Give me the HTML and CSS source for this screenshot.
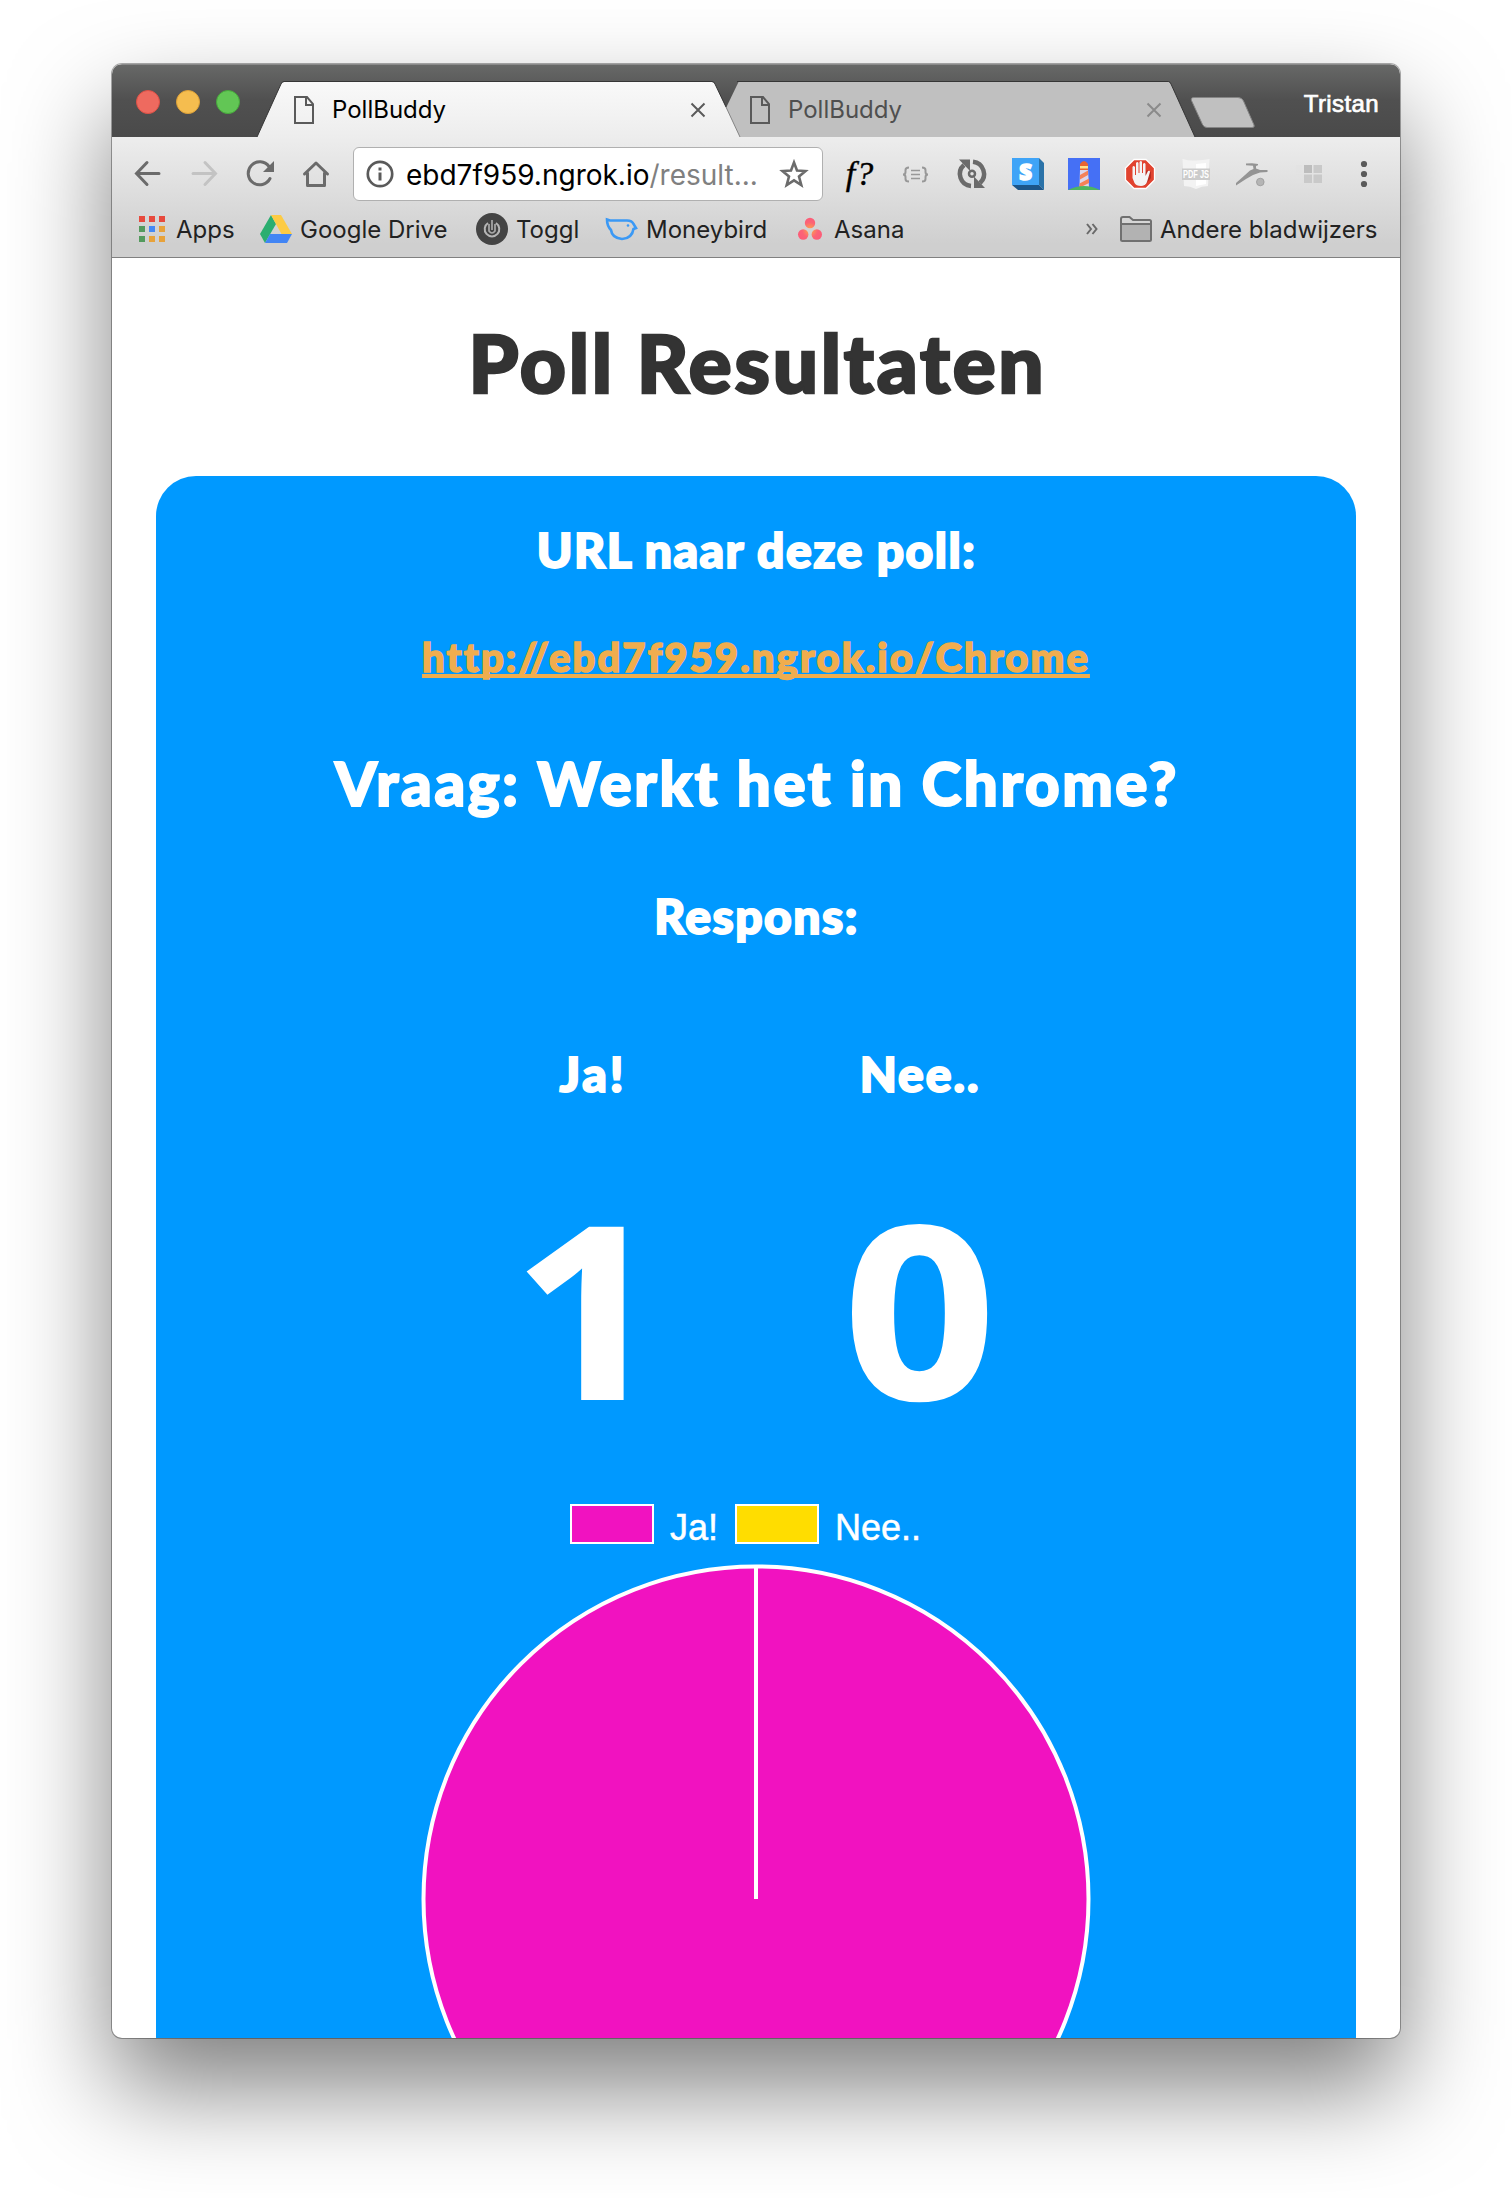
FILE: index.html
```html
<!DOCTYPE html>
<html lang="nl">
<head>
<meta charset="utf-8">
<title>PollBuddy</title>
<link rel="stylesheet" href="styles.css">
</head>
<body>
<main class="window">
  <header class="chrome">
    <div class="tabstrip">
      <svg class="tab-shapes" width="1288" height="73" viewBox="112 64 1288 73">
        <defs>
          <linearGradient id="tabfill" x1="0" y1="0" x2="0" y2="1"><stop offset="0" stop-color="#f9f9f9"/><stop offset="1" stop-color="#ededed"/></linearGradient>
        </defs>
        <path d="M712 137L738.500 82H1168.500Q1170 82 1171 84L1195 137Z" fill="#c0c0c0"/>
        <path d="M737 81.500H1168.500Q1170 81.500 1171 84L1195 137" fill="none" stroke="#363636" stroke-width="1"/>
        <path d="M257 137L281 84Q282 82 284 82H712Q714 82 715 84L740 137Z" fill="url(#tabfill)"/>
        <path d="M257 137L281 84Q282 81.500 284 81.500H712Q714 81.500 715 84L726 107" fill="none" stroke="#363636"/>
        <path d="M726 107L740 137" stroke="#858585" fill="none"/>
        <path d="M1194 97.500H1238Q1242 97.500 1243.500 101L1254 125Q1255 127.500 1252 127.500H1207Q1204 127.500 1202.500 124.500L1191.500 100.500Q1190.500 97.500 1194 97.500Z" fill="#c0c0c0" stroke="#858585"/>
      </svg>
      <div class="lights"><i class="red"></i><i class="yellow"></i><i class="green"></i></div>
      <div class="tab">
        <svg width="20" height="28" viewBox="0 0 20 28"><path d="M1 1H13L19 8V27H1ZM12 1V9H19" fill="none" stroke="#5a5a5a" stroke-width="2"/></svg>
        <span class="tab-title">PollBuddy</span>
        <svg width="16" height="16" viewBox="0 0 16 16"><path d="M1.500 1.500L14.500 14.500M14.500 1.500L1.500 14.500" stroke="#5a5a5a" stroke-width="2"/></svg>
      </div>
      <div class="tab inactive">
        <svg width="20" height="28" viewBox="0 0 20 28"><path d="M1 1H13L19 8V27H1ZM12 1V9H19" fill="none" stroke="#5a5a5a" stroke-width="2"/></svg>
        <span class="tab-title">PollBuddy</span>
        <svg width="16" height="16" viewBox="0 0 16 16"><path d="M1.500 1.500L14.500 14.500M14.500 1.500L1.500 14.500" stroke="#8a8a8a" stroke-width="2"/></svg>
      </div>
      <span class="profile">Tristan</span>
    </div>

    <div class="toolbar">
      <div class="icons">
        <svg width="32" height="32" viewBox="132 158 32 32"><path d="M159 173.500H136.500M147 162.500L136.500 173.500L147 184.500" fill="none" stroke="#6b6b6b" stroke-width="3" stroke-linecap="round"/></svg>
        <svg width="32" height="32" viewBox="188 158 32 32"><path d="M193 173.500H215.500M205 162.500L215.500 173.500L205 184.500" fill="none" stroke="#c3c3c3" stroke-width="3" stroke-linecap="round"/></svg>
        <svg width="32" height="32" viewBox="244 158 32 32"><path d="M269 166.500A11.500 11.500 0 1 0 270 178.500" fill="none" stroke="#6b6b6b" stroke-width="3" stroke-linecap="round"/><path d="M274 161V172H263Z" fill="#6b6b6b"/></svg>
        <svg width="32" height="32" viewBox="300 158 32 32"><path d="M304.500 174L316 163L327.500 174M307.500 173V185.500H324.500V173" fill="none" stroke="#6b6b6b" stroke-width="3" stroke-linejoin="round" stroke-linecap="round"/></svg>
      </div>
      <div class="omnibox">
        <svg width="28" height="28" viewBox="0 0 28 28"><circle cx="14" cy="14" r="12.200" fill="none" stroke="#5a5a5a" stroke-width="2.700"/><path d="M12.500 7.500h3v3h-3zM12.500 12.500h3v8h-3z" fill="#5a5a5a"/></svg>
        <span class="url"><span class="host">ebd7f959.ngrok.io</span><span class="path">/result...</span></span>
        <svg width="30" height="30" viewBox="0 0 30 30"><path d="M15 3.500L18 11.500L26.500 12L20 17.500L22.300 26L15 21.300L7.700 26L10 17.500L3.500 12L12 11.500Z" fill="none" stroke="#6b6b6b" stroke-width="2.600"/></svg>
      </div>
      <div class="icons">
        <span class="fq">f?</span>
        <svg width="32" height="32" viewBox="900 158 32 32"><path d="M909 167.500Q905.500 167.500 905.500 170V172Q905.500 174.500 903 174.500Q905.500 174.500 905.500 177V179Q905.500 181.500 909 181.500M922 167.500Q925.500 167.500 925.500 170V172Q925.500 174.500 928 174.500Q925.500 174.500 925.500 177V179Q925.500 181.500 922 181.500" fill="none" stroke="#989898" stroke-width="2"/><path d="M911 170.500H920M911 174.500H920M911 178.500H920" stroke="#989898" stroke-width="1.500"/></svg>
        <svg width="32" height="32" viewBox="956 158 32 32"><path d="M964 165A12 12 0 0 0 971 186M973 161.700A12.300 12.300 0 0 1 980 183" fill="none" stroke="#6b6b6b" stroke-width="4.500"/><path d="M959 159.500H970V171ZM974 176.500V188H985Z" fill="#6b6b6b"/><circle cx="972" cy="173.800" r="3" fill="none" stroke="#6b6b6b" stroke-width="2.500"/></svg>
        <svg width="32" height="32" viewBox="0 0 32 32"><path d="M27 0L32 5V32L27 27Z" fill="#2a72a8"/><path d="M0 27H27L32 32H6Z" fill="#1c568a"/><path d="M0 0H27V27H0Z" fill="#3fa4f7"/><text x="13.500" y="21.500" text-anchor="middle" font-family="Open Sans, sans-serif" font-weight="800" font-size="22" stroke="#fff" stroke-width="1.600" fill="#fff">S</text></svg>
        <svg width="32" height="32" viewBox="0 0 32 32"><path d="M0 0H32V32H0Z" fill="#4570f5"/><path d="M12 11H20L21 29H11.500Z" fill="#dcd7ea"/><path d="M12 17L20 12.500V17L12 21.500ZM11.500 25.500L21 20.500V25L13 29H11.500Z" fill="#f48258"/><path d="M12 7H20V12H12Z" fill="#ffe28a"/><path d="M12 8V6Q16 0 20 6V8ZM12 10.500H20V12H12Z" fill="#e96532"/><path d="M0 32Q8 28 16 28T32 32Z" fill="#4db560"/></svg>
        <svg width="32" height="32" viewBox="0 0 32 32"><path d="M10 1.500H22L30.500 10V22L22 30.500H10L1.500 22V10Z" fill="#e1432f" stroke="#fff" stroke-width="1.300"/><path d="M23 12L27 14V20L20 28L13 27Z" fill="#b72c20"/><path d="M8.500 9Q9.500 7 11 9V17H12V5Q13.500 3 14.500 5V15H15.500V4Q17 2 18 4V15H19V6Q20.500 4 21.500 6V18L24 13Q26 12 26 14L23 24Q21.500 28 17 28Q12 28 10.500 25L8.500 20Z" fill="#f4f4f4"/></svg>
        <svg width="32" height="32" viewBox="0 0 32 32"><path d="M2.500 1Q9 3 16 2.500T29.500 1L28 28Q22 28 16 31Q10 28 4 28Z" fill="#f3f3f3"/><path d="M16 6L26 5V26L16 28Z" fill="#fff"/><path d="M2 10.500H30V22H2Z" fill="#cbcbcb"/><text x="16" y="20.300" text-anchor="middle" textLength="26" lengthAdjust="spacingAndGlyphs" font-family="Liberation Sans, sans-serif" font-weight="700" font-size="11" fill="#fff">PDF JS</text></svg>
        <svg width="32" height="32" viewBox="0 0 32 32"><path d="M0 27.500V25L9 17L14 12.500L17.500 11L17 7.800L10 7.200V5.500L16 5.200L22 6V7.300L20 8V10.500L24 12L31.500 12V14L24 14.500L17 17L10 21Z" fill="#949494"/><circle cx="24.300" cy="24" r="3.800" fill="#b5b5b5" stroke="#999" stroke-width=".8"/></svg>
        <svg width="32" height="32" viewBox="0 0 32 32"><path d="M12 7H20V15H12Z" fill="#bdbdbd"/><path d="M21.500 7H30V15H21.500ZM12 16.500H20V25H12ZM21.500 16.500H30V25H21.500Z" fill="#c9c9c9"/><path d="M4 7H10V15H4ZM4 16.500H10V25H4Z" fill="#e1e1e1" opacity=".5"/></svg>
        <svg width="32" height="32" viewBox="0 0 32 32"><g fill="#5a5a5a"><circle cx="16" cy="6" r="3.100"/><circle cx="16" cy="16" r="3.100"/><circle cx="16" cy="26" r="3.100"/></g></svg>
      </div>
    </div>

    <nav class="bookmarks">
      <div class="bm bm-apps"><svg width="26" height="26" viewBox="0 0 26 26"><path d="M0 0h6v6H0zM10 0h6v6h-6zM20 0h6v6h-6z" fill="#e74a3d"/><path d="M0 10h6v6H0zM0 20h6v6H0z" fill="#539a5d"/><path d="M10 10h6v6h-6z" fill="#4489f5"/><path d="M20 10h6v6h-6zM10 20h6v6h-6zM20 20h6v6h-6z" fill="#e8a23a"/></svg><span>Apps</span></div>
      <div class="bm bm-drive"><svg width="32" height="30" viewBox="0 0 32 30"><path d="M11 1L16 10L5 29L0 20Z" fill="#2bae70"/><path d="M11 1H21L32 20H21.500Z" fill="#fdcb44"/><path d="M10 20H32L27 29H5Z" fill="#4285f4"/></svg><span>Google Drive</span></div>
      <div class="bm bm-toggl"><svg width="32" height="32" viewBox="0 0 32 32"><circle cx="16" cy="16" r="16" fill="#444"/><path d="M12 10A7.300 7.300 0 1 0 20 10" fill="none" stroke="#b6b6b6" stroke-width="2"/><path d="M16 7V17M13 11V18Q16 22 19 18V11" fill="none" stroke="#aaa" stroke-width="1.700"/></svg><span>Toggl</span></div>
      <div class="bm bm-money"><svg width="33" height="26" viewBox="0 0 33 26"><path d="M2 3.500L5 4.500H22Q27 4.500 28.500 8L31 12L28.500 13Q27 22.500 17 23Q7 22 6 14Q2 10 2 3.500Z" fill="none" stroke="#3b99f5" stroke-width="2.600"/><circle cx="23" cy="9.500" r="1.300" fill="#3b99f5"/></svg><span>Moneybird</span></div>
      <div class="bm bm-asana"><svg width="24" height="24" viewBox="0 0 24 24"><defs><radialGradient id="as" gradientUnits="userSpaceOnUse" cx="12" cy="13" r="13"><stop offset="0" stop-color="#ffab45"/><stop offset=".6" stop-color="#fc6376"/><stop offset="1" stop-color="#fc5c78"/></radialGradient></defs><g fill="url(#as)"><circle cx="12" cy="6" r="5.200"/><circle cx="5.200" cy="17.500" r="5.200"/><circle cx="18.800" cy="17.500" r="5.200"/></g></svg><span>Asana</span></div>
      <svg class="more" width="12" height="12" viewBox="0 0 12 12"><path d="M1 1L5 6L1 11M6.500 1L10.500 6L6.500 11" fill="none" stroke="#6a6a6a" stroke-width="2"/></svg>
      <div class="bm bm-other"><svg width="32" height="26" viewBox="0 0 32 26"><path d="M1 24V3Q1 1 3 1H9.500L13 4H29.500Q31 4 31 5.500V23.500Q31 25 29.500 25H2.500Q1 25 1 23.500Z" fill="#d6d6d6" stroke="#707070" stroke-width="2"/><path d="M2 9H30V24H2Z" fill="#b2b2b2"/><path d="M1 8H31" stroke="#707070" stroke-width="2"/></svg><span>Andere bladwijzers</span></div>
    </nav>
  </header>

  <section class="page">
    <h1>Poll Resultaten</h1>
    <div class="card">
      <h3 class="label">URL naar deze poll:</h3>
      <a class="poll-link" href="#">http://ebd7f959.ngrok.io/Chrome</a>
      <h2>Vraag: Werkt het in Chrome?</h2>
      <h3 class="respons">Respons:</h3>
      <div class="results">
        <div class="answer"><h3 class="ja">Ja!</h3><div class="count one">1</div></div>
        <div class="answer"><h3 class="nee">Nee..</h3><div class="count zero">0</div></div>
      </div>
      <div class="legend">
        <i class="swatch pink"></i><span class="legend-ja">Ja!</span>
        <i class="swatch gold"></i><span>Nee..</span>
      </div>
      <svg class="pie" width="680" height="680" viewBox="-340 -340 680 680"><circle r="332.500" fill="#f112c0" stroke="#fff" stroke-width="4"/><path d="M0 0V-332" stroke="#fff" stroke-width="4"/></svg>
    </div>
  </section>
</main>
</body>
</html>
```
FILE: styles.css
```css
* { box-sizing: border-box; }
body {
  margin: 0;
  padding: 64px 112px 0;
  height: 2198px;
  overflow: hidden;
  background: #fff;
}
svg { display: block; flex: none; overflow: visible; }
.window {
  width: 1288px;
  height: 1974px;
  overflow: hidden;
  border-radius: 10px;
  background: #fff;
  box-shadow: 0 0 0 1px rgba(0, 0, 0, .32), 0 50px 100px rgba(0, 0, 0, .5);
}
.chrome {
  height: 194px;
  background: linear-gradient(#f9f9f9 18px, #ededed 73px, #cfcfcf 180px);
  border-bottom: 1px solid #808080;
  font-family: Inter, Roboto, sans-serif;
  font-size: 24px;
  color: #222;
  white-space: nowrap;
}
.tabstrip {
  position: relative;
  height: 73px;
  display: flex;
  background: linear-gradient(#676867, #505050 35px, #4a4a4a);
  border-top: 1px solid #8a8a8a;
}
.tab-shapes { position: absolute; left: 0; top: -1px; }
.lights { display: flex; gap: 16px; padding: 25px 0 0 24px; width: 182px; }
.lights i { width: 24px; height: 24px; border-radius: 50%; border: 1px solid; }
.lights .red { background: #ee6a5f; border-color: #dd5045; }
.lights .yellow { background: #f5bd4f; border-color: #dda037; }
.lights .green { background: #62c655; border-color: #46a93b; }
.tab {
  position: relative;
  display: flex;
  align-items: center;
  width: 412px;
  height: 40px;
  margin-top: 25px;
  color: #000;
}
.tab.inactive { margin-left: 44px; color: #4f4f4f; }
.tab-title { flex: 1; margin-left: 18px; line-height: 32px; }
.profile {
  position: relative;
  margin: 24px 21px 0 auto;
  font: 24px/30px "Liberation Sans", sans-serif;
  letter-spacing: .4px;
  color: #fff;
  -webkit-text-stroke: .7px #fff;
}
.toolbar { display: flex; align-items: center; height: 74px; padding: 0 20px; gap: 21px; }
.icons { display: flex; gap: 24px; align-items: center; }
.omnibox {
  width: 470px;
  height: 54px;
  padding: 0 13px 0 12px;
  display: flex;
  align-items: center;
  border: 1px solid #b0b0b0;
  border-radius: 6px;
  background: #fff;
  font-size: 28px;
}
.url { flex: 1; margin-left: 12px; padding-top: 2px; line-height: 36px; }
.host { color: #000; }
.path { color: #808080; }
.fq {
  width: 32px;
  font: italic 34px/32px "Liberation Serif", serif;
  letter-spacing: 1px;
  color: #000;
  -webkit-text-stroke: .4px #000;
  display: flex;
  justify-content: center;
}
.bookmarks { display: flex; align-items: center; height: 36px; padding-left: 27px; }
.bm { display: flex; align-items: center; height: 36px; }
.bm span { padding-top: 1px; line-height: 35px; }
.bm-apps { width: 121px; gap: 11px; }
.bm-drive { width: 216px; gap: 8px; }
.bm-toggl { width: 129px; gap: 8px; }
.bm-money { width: 193px; gap: 8px; }
.bm-asana { width: 288px; gap: 12px; }
.more { margin-right: 22px; }
.bm-other { gap: 8px; }

.page {
  padding: 56px 44px 0;
  font-family: Lato, sans-serif;
  font-weight: 900;
  text-align: center;
  white-space: nowrap;
}
h1, h2, h3 { margin: 0; font-weight: 900; }
h1 {
  font-size: 80px;
  line-height: 96px;
  color: #333;
  letter-spacing: 2.8px;
  text-indent: 3px;
  -webkit-text-stroke: 2.5px #333;
}
.card {
  height: 1600px;
  margin-top: 66px;
  padding-top: 45px;
  border-radius: 40px;
  background: #09f;
  color: #fff;
  display: flex;
  flex-direction: column;
  align-items: center;
}
h3 {
  font-size: 48px;
  line-height: 58px;
  letter-spacing: 1.5px;
  text-indent: 1px;
  -webkit-text-stroke: 2px #fff;
}
.poll-link {
  margin-top: 54px;
  font-size: 40px;
  line-height: 48px;
  letter-spacing: 2.1px;
  color: #f0ad4e;
  -webkit-text-stroke: 1.5px #f0ad4e;
  text-decoration: underline;
  text-decoration-thickness: 4px;
  text-underline-offset: 2px;
  text-decoration-skip-ink: none;
}
h2 {
  margin-top: 66px;
  font-size: 60px;
  line-height: 72px;
  letter-spacing: 2.6px;
  text-indent: 2px;
  -webkit-text-stroke: 2px #fff;
}
.respons { margin-top: 68px; }
.results { display: flex; margin-top: 100px; }
.answer { width: 327px; display: flex; flex-direction: column; align-items: center; }
.ja { letter-spacing: 3px; }
.nee { letter-spacing: 2px; }
.count {
  margin-top: 83px;
  font: 700 240px/240px "Open Sans", sans-serif;
  transform: scaleX(1.11);
  -webkit-text-stroke: 2px #fff;
}
.one { margin-left: -8px; }
.legend {
  display: flex;
  width: 372px;
  height: 40px;
  margin-top: 78px;
  font: 36px/47px "Liberation Sans", sans-serif;
  -webkit-text-stroke: .5px #fff;
}
.swatch { width: 84px; height: 40px; margin-right: 16px; border: 2px solid #fff; }
.pink { background: #f112c0; }
.gold { background: #fd0; }
.legend-ja { width: 65px; text-align: left; }
.pie { margin-top: 15px; }
```
